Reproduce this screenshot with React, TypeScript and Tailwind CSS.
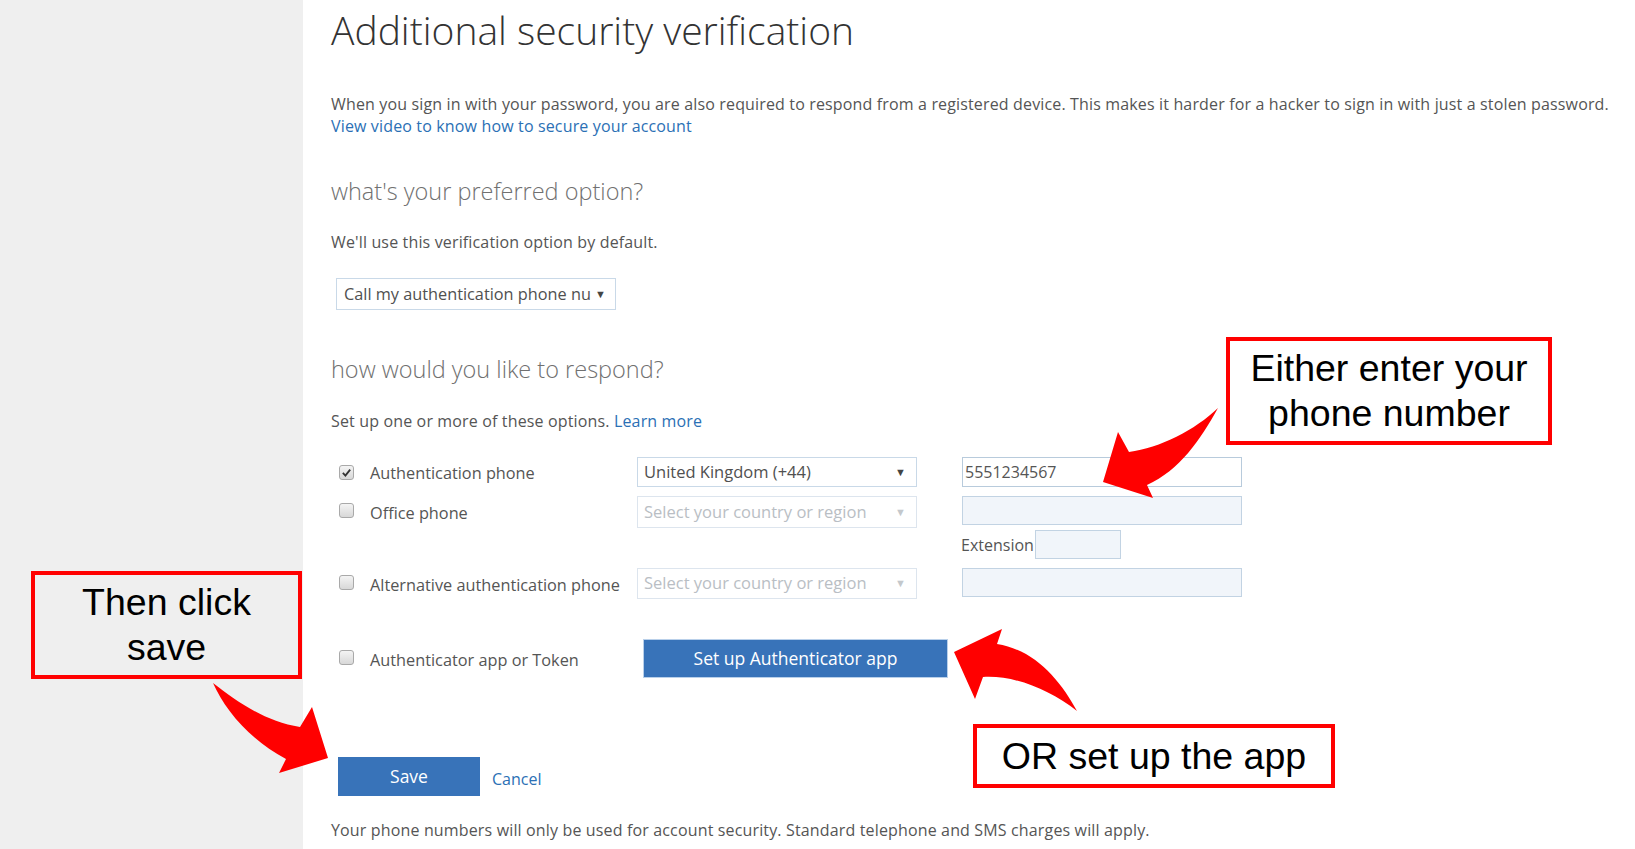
import React from "react";

const body = "font-['Open_Sans',sans-serif]";

function Checkbox({ checked }: { checked?: boolean }) {
  return (
    <span className="relative inline-flex h-[15px] w-[15px] shrink-0 items-center justify-center rounded-[3px] border border-[#a9a9a9] bg-gradient-to-b from-[#f4f4f4] to-[#d8d8d8]">
      {checked ? (
        <svg viewBox="0 0 12 12" className="h-[11px] w-[11px]">
          <path d="M2 6.5 L4.8 9.3 L10 2.8" fill="none" stroke="#333" strokeWidth="2" />
        </svg>
      ) : null}
    </span>
  );
}

function CountrySelect({ value, disabled }: { value: string; disabled?: boolean }) {
  return (
    <div
      className={`flex h-full w-[280px] items-center justify-between border px-[6px] text-[16.5px] ${
        disabled ? "border-[#dde5ee] text-[#b9bec4]" : "border-[#c9d9e8] text-[#505050]"
      }`}
    >
      <span>{value}</span>
      <span className={`mr-[4px] text-[11px] ${disabled ? "text-[#c4c8cc]" : "text-[#444]"}`}>▼</span>
    </div>
  );
}

function Row({
  label,
  checked,
  h,
  children,
  right,
}: {
  label: string;
  checked?: boolean;
  h: string;
  children?: React.ReactNode;
  right?: React.ReactNode;
}) {
  return (
    <div className={`flex ${h} items-center`}>
      <div className="flex w-[306px] items-center">
        <div className="ml-[8px] w-[31px]">
          <Checkbox checked={checked} />
        </div>
        <span className="pt-[3px] text-[16.3px] text-[#555]">{label}</span>
      </div>
      <div className="h-full">{children}</div>
      <div className="ml-[45px] h-full">{right}</div>
    </div>
  );
}

function Callout({ className, children }: { className: string; children: React.ReactNode }) {
  return (
    <div
      className={`absolute flex items-center justify-center border-[4px] border-[#ff0000] text-center font-['Liberation_Sans',Arial,sans-serif] text-[37.5px] leading-[45px] text-black ${className}`}
    >
      {children}
    </div>
  );
}

export default function App() {
  return (
    <div className={`relative flex h-[849px] w-[1635px] overflow-hidden bg-white ${body}`}>
      <div className="w-[303px] shrink-0 bg-[#efefef]" />

      <div className="flex flex-col pl-[28px] pt-[8px]">
        <h1 className="text-[39px] font-light leading-[44px] text-[#333]">Additional security verification</h1>

        <p className="mt-[41px] text-[16px] leading-[22px] tracking-[0.15px] text-[#555]">
          When you sign in with your password, you are also required to respond from a registered device. This makes it
          harder for a hacker to sign in with just a stolen password.
          <br />
          <a className="text-[#2b70b5]">View video to know how to secure your account</a>
        </p>

        <h2 className="mt-[39px] text-[23.5px] font-light leading-[30px] text-[#707070]">what's your preferred option?</h2>
        <p className="mt-[25px] text-[16px] leading-[22px] tracking-[0.15px] text-[#555]">
          We'll use this verification option by default.
        </p>

        <div className="ml-[5px] mt-[25px] flex h-[32px] w-[280px] items-center justify-between border border-[#c9d9e8] px-[7px] text-[16.3px] text-[#505050]">
          <span className="whitespace-nowrap">Call my authentication phone nu</span>
          <span className="mr-[2px] text-[11px] text-[#444]">▼</span>
        </div>

        <h2 className="mt-[44px] text-[23.5px] font-light leading-[30px] text-[#707070]">how would you like to respond?</h2>
        <p className="mt-[26px] text-[16px] leading-[22px] tracking-[0.15px] text-[#555]">
          Set up one or more of these options. <a className="text-[#2b70b5]">Learn more</a>
        </p>

        <div className="mt-[25px] flex flex-col">
          <Row
            label="Authentication phone"
            checked
            h="h-[30px]"
            right={
              <div className="flex h-full w-[280px] items-center border border-[#b8cbdc] px-[2px] text-[16px] text-[#555]">
                5551234567
              </div>
            }
          >
            <CountrySelect value="United Kingdom (+44)" />
          </Row>

          <div className="mt-[9px]">
            <Row
              label="Office phone"
              h="h-[32px]"
              right={<div className="h-[29px] w-[280px] border border-[#c2d3e3] bg-[#f1f5fa]" />}
            >
              <CountrySelect value="Select your country or region" disabled />
            </Row>
          </div>

          <div className="mt-[2px] flex h-[29px] items-center pl-[630px]">
            <span className="text-[16px] text-[#555]">Extension</span>
            <div className="ml-[1px] h-[29px] w-[86px] border border-[#c2d3e3] bg-[#f1f5fa]" />
          </div>

          <div className="mt-[9px]">
            <Row
              label="Alternative authentication phone"
              h="h-[31px]"
              right={<div className="h-[29px] w-[280px] border border-[#c2d3e3] bg-[#f1f5fa]" />}
            >
              <CountrySelect value="Select your country or region" disabled />
            </Row>
          </div>

          <div className="mt-[40px]">
            <Row label="Authenticator app or Token" h="h-[39px]">
              <button className="ml-[6px] h-full w-[305px] border border-[#b9d0ea] bg-[#3873b9] text-[17.5px] text-white">
                Set up Authenticator app
              </button>
            </Row>
          </div>
        </div>

        <div className="ml-[7px] mt-[79px] flex items-center">
          <button className="h-[39px] w-[142px] bg-[#3873b9] text-[17.5px] text-white">Save</button>
          <a className="ml-[12px] pt-[4px] text-[16px] text-[#2b70b5]">Cancel</a>
        </div>

        <p className="mt-[23px] whitespace-nowrap text-[16px] leading-[22px] tracking-[0.15px] text-[#555]">
          Your phone numbers will only be used for account security. Standard telephone and SMS charges will apply.
        </p>
      </div>

      <Callout className="left-[1226px] top-[337px] h-[108px] w-[326px]">
        Either enter your
        <br />
        phone number
      </Callout>
      <Callout className="left-[31px] top-[571px] h-[108px] w-[271px] bg-[#efefef]">
        Then click
        <br />
        save
      </Callout>
      <Callout className="left-[973px] top-[724px] h-[64px] w-[362px]">OR set up the app</Callout>

      <svg className="pointer-events-none absolute left-0 top-0" width="1635" height="849">
        <path
          d="M1218,408 C1200,440 1180,470 1147,485 L1153,498 L1103,482 L1118,432 L1129,452 C1160,448 1195,430 1218,408 Z"
          fill="#ff0000"
        />
        <path
          d="M213,683 C235,700 265,722 300,727 L312,707 L328,758 L279,773 L286,759 C250,740 225,710 213,683 Z"
          fill="#ff0000"
        />
        <path
          d="M1077,711 C1060,680 1035,650 997,644 L1002,629 L954,652 L975,699 L983,677 C1015,675 1050,690 1077,711 Z"
          fill="#ff0000"
        />
      </svg>
    </div>
  );
}
